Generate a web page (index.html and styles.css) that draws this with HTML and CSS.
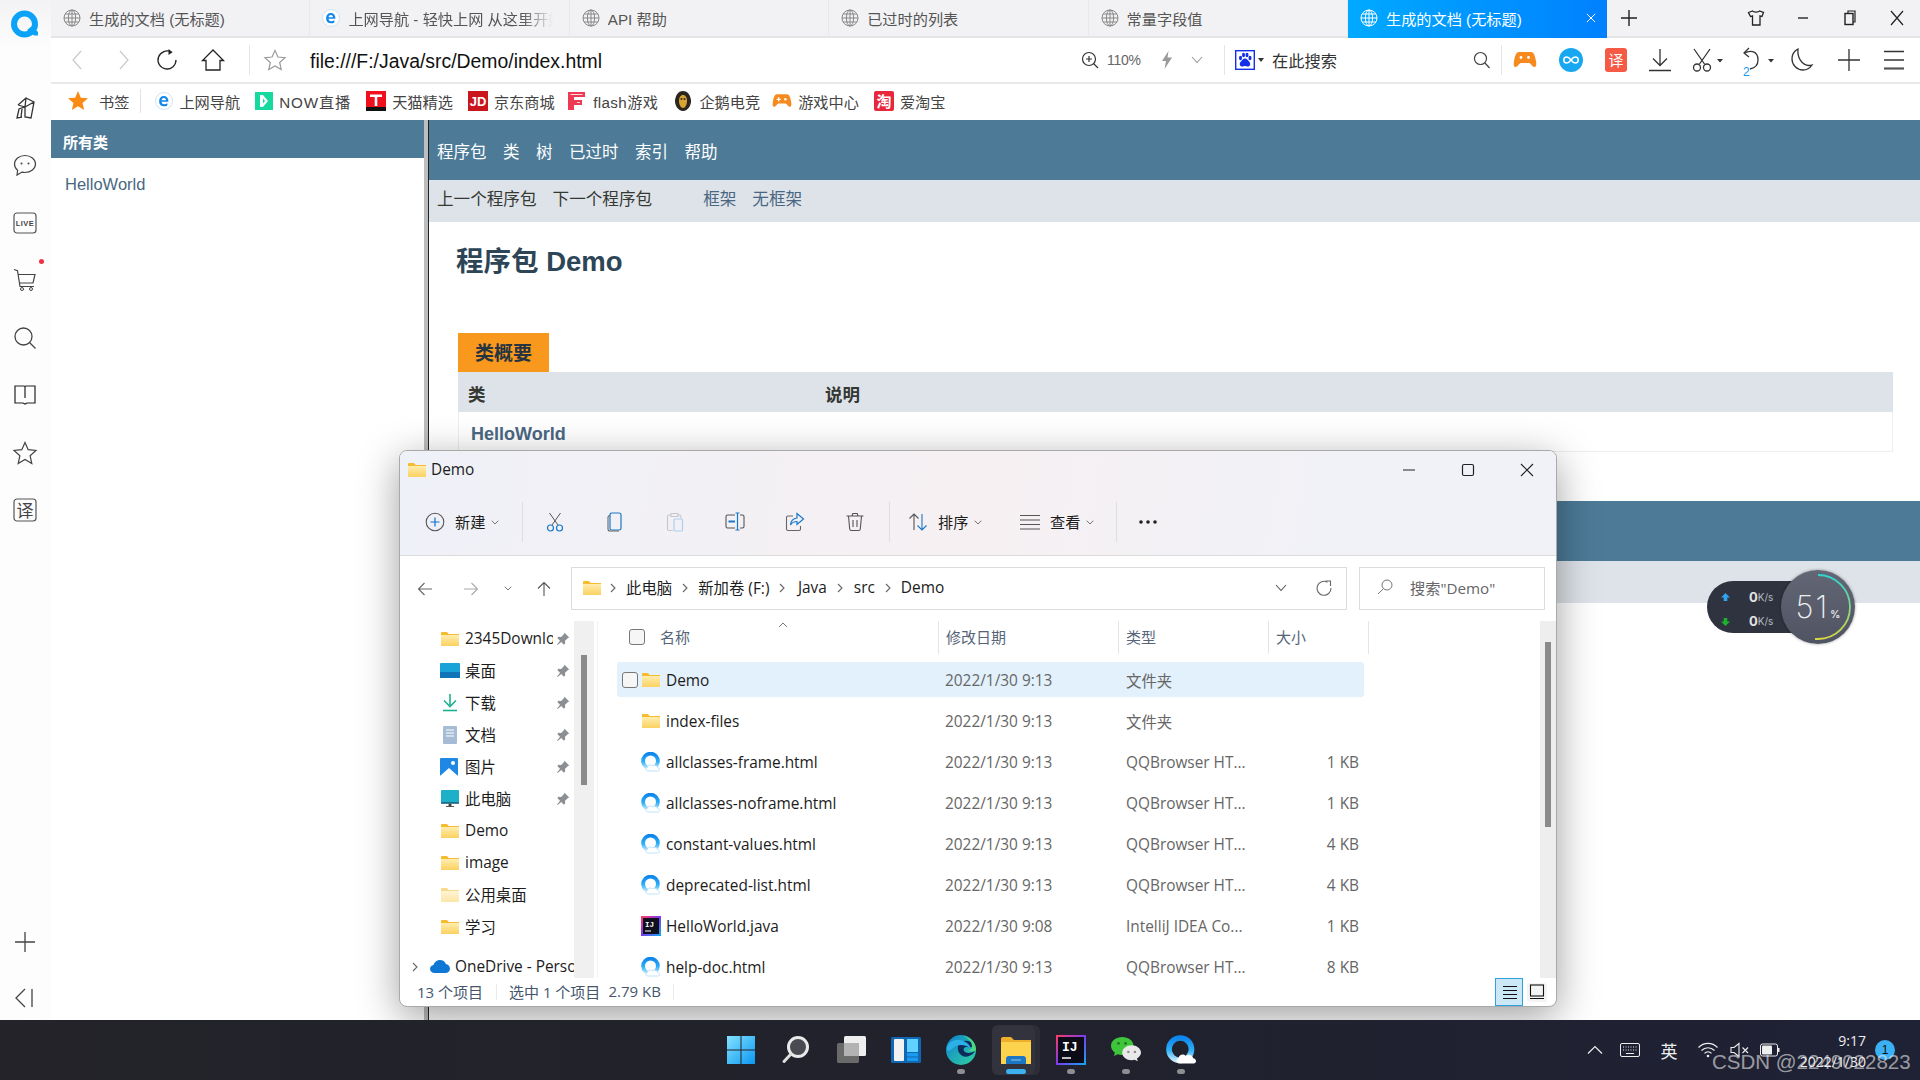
FILE: index.html
```html
<!DOCTYPE html>
<html lang="zh-CN">
<head>
<meta charset="utf-8">
<title>生成的文档 (无标题)</title>
<link rel="stylesheet" href="styles.css">
</head>
<body>
<svg class="sprite" aria-hidden="true">
  <defs>
    <linearGradient id="gFolder" x1="0" y1="0" x2="0" y2="1"><stop offset="0" stop-color="#ffedb0"/><stop offset="1" stop-color="#fbd160"/></linearGradient>
    <linearGradient id="gQ" x1="0" y1="0" x2="0" y2="1"><stop offset="0" stop-color="#0f86ec"/><stop offset=".55" stop-color="#2fb0f8"/><stop offset="1" stop-color="#c4e9fd"/></linearGradient>
    <linearGradient id="gWin" x1="0" y1="0" x2="1" y2="1"><stop offset="0" stop-color="#84e3ff"/><stop offset="1" stop-color="#0b97f2"/></linearGradient>
    <linearGradient id="gEdge" x1="0" y1="0" x2="1" y2="1"><stop offset="0" stop-color="#0f7fd0"/><stop offset="1" stop-color="#2fd3a0"/></linearGradient>
    <linearGradient id="gArc" x1="0" y1="0" x2="0" y2="1"><stop offset="0" stop-color="#2fd6cf"/><stop offset="1" stop-color="#d9d843"/></linearGradient>
    <linearGradient id="gIJ" x1="0" y1="0" x2="1" y2="1"><stop offset="0" stop-color="#fc3a6c"/><stop offset=".5" stop-color="#7a3cf0"/><stop offset="1" stop-color="#14a4f0"/></linearGradient>
    <symbol id="folder" viewBox="0 0 18 14"><path d="M0 1.2C0 .5.5 0 1.2 0h4.6l2 2H18v12H0z" fill="#f6bb2e"/><path d="M0 3h18v11H0z" fill="url(#gFolder)"/></symbol>
    <symbol id="qq" viewBox="0 0 20 20"><circle cx="9.500" cy="9" r="7.400" fill="#fff" stroke="url(#gQ)" stroke-width="3.800"/><path d="M7 19c-2.300 0-2.900-2.800-.7-3.500.4-2.400 3.300-3.300 4.800-1.500 2-1.500 5-.7 5.500 1.500 2.400.2 2.600 3.500.2 3.500z" fill="#fff" stroke="#a3d8f6" stroke-width=".7"/></symbol>
    <symbol id="pin" viewBox="0 0 14 14"><path d="M8.500.8l4.700 4.700-1.200.6-3 2.600.2 2.800-1.200 1.200-2.800-2.800L1.500 13l-.5-.5 3-3.800L1.300 6l1.200-1.200 2.800.2L8 2z" fill="#8b8f93"/></symbol>
    <symbol id="crumb" viewBox="0 0 6 10"><path d="M1 1l4 4-4 4" fill="none" stroke="#666" stroke-width="1.100"/></symbol>
    <symbol id="chevd" viewBox="0 0 8 5"><path d="M.7.7L4 4 7.300.7" fill="none" stroke="#777" stroke-width="1"/></symbol>
    <symbol id="globe" viewBox="0 0 18 18"><g fill="none" stroke="currentColor" stroke-width="1"><circle cx="9" cy="9" r="8"/><ellipse cx="9" cy="9" rx="3.600" ry="8"/><path d="M1 9h16M2.200 5h13.600M2.200 13h13.600M9 1v16"/></g></symbol>
    <symbol id="eicon" viewBox="0 0 18 18"><circle cx="9" cy="9" r="8.500" fill="#fff" stroke="#cfe3f6"/><path d="M13.300 9.800H6.600c.1 1.700 1.200 2.500 2.600 2.500 1 0 2-.3 3.200-1v2.100c-1 .6-2.200.9-3.500.9-3 0-4.800-1.900-4.800-5.100C4.100 6 6 4 8.800 4c2.800 0 4.600 2 4.600 5zM6.600 8.200H11c-.1-1.300-.9-2.100-2.100-2.100-1.200 0-2.100.8-2.300 2.100z" fill="#1287ea"/></symbol>
  </defs>
</svg>

<div class="screen">
  <aside class="rail">
    <div class="rail-logo">
      <svg class="ic-logo" viewBox="0 0 32 32"><circle cx="15.500" cy="15" r="10.500" fill="none" stroke="#0ca2f7" stroke-width="6"/><path d="M18 21l7 5.500h4V23l-6-6z" fill="#0ca2f7"/></svg>
    </div>
    <div class="rail-list">
      <div class="rail-cell"><svg class="ic-rail" viewBox="0 0 24 24"><path d="M5 9l8-7 8 4-3 16-6-1V11l-6 2-2 9 5-1M13 2l-1 9M21 6l-9 5M5 9l7 2M9 13l-1 8" fill="none" stroke="#333" stroke-width="1.300"/></svg></div>
      <div class="rail-cell"><svg class="ic-rail" viewBox="0 0 24 24"><path d="M12 2.500c5.800 0 10.500 3.800 10.500 8.500s-4.700 8.500-10.500 8.500c-1 0-2-.1-3-.4L4 22l.6-4.700C2.700 15.800 1.500 13.500 1.500 11 1.500 6.300 6.200 2.500 12 2.500z" fill="none" stroke="#444" stroke-width="1.200"/><circle cx="8.500" cy="10.500" r="1" fill="#444"/><circle cx="15.500" cy="10.500" r="1" fill="#444"/></svg></div>
      <div class="rail-cell"><svg class="ic-rail" viewBox="0 0 24 24"><rect x="1" y="2" width="22" height="20" rx="3" fill="none" stroke="#555" stroke-width="1.200"/><text x="12" y="15.300" class="live-text">LIVE</text></svg></div>
      <div class="rail-cell rail-cart"><svg class="ic-rail" viewBox="0 0 24 24"><path d="M1 1.500l3.500 1.200L7 18.500h14M5 6.500h17l-2 8.500H6.500" fill="none" stroke="#444" stroke-width="1.200"/><circle cx="9" cy="21" r="1.500" fill="none" stroke="#444"/><circle cx="18" cy="21" r="1.500" fill="none" stroke="#444"/></svg><span class="dot-red"></span></div>
      <div class="rail-cell"><svg class="ic-rail" viewBox="0 0 24 24"><circle cx="10.500" cy="10.500" r="8.500" fill="none" stroke="#444" stroke-width="1.300"/><path d="M16.500 16.500l6 6" stroke="#444" stroke-width="1.300"/></svg></div>
      <div class="rail-cell"><svg class="ic-rail" viewBox="0 0 24 24"><path d="M2 3h9c.6 0 1 .4 1 1 0-.6.4-1 1-1h9v17h-8l-2 1-2-1H2zM12 4v11" fill="none" stroke="#222" stroke-width="1.200"/></svg></div>
      <div class="rail-cell"><svg class="ic-rail" viewBox="0 0 24 24"><path d="M12 1.500l3.200 7.200 7.800.8-5.900 5.200 1.700 7.800L12 18.400l-6.800 4.100 1.700-7.800L1 9.500l7.800-.8z" fill="none" stroke="#444" stroke-width="1.200"/></svg></div>
      <div class="rail-cell"><svg class="ic-rail" viewBox="0 0 24 24"><rect x="1" y="1" width="22" height="22" rx="3" fill="none" stroke="#555" stroke-width="1.200"/><text x="12" y="18.500" class="yi-text">译</text></svg></div>
    </div>
    <div class="rail-foot">
      <div class="rail-cell rail-plus"><svg class="ic-rail" viewBox="0 0 24 24"><path d="M12 2v20M2 12h20" stroke="#444" stroke-width="1.300"/></svg></div>
      <div class="rail-cell rail-collapse"><svg class="ic-rail" viewBox="0 0 24 24"><path d="M12 3L3 12l9 9M19 3v18" fill="none" stroke="#444" stroke-width="1.300"/></svg></div>
    </div>
  </aside>

  <div class="browser">
    <div class="tabstrip">
      <div class="tab"><svg class="ic-globe"><use href="#globe"/></svg><span class="tab-text">生成的文档 (无标题)</span></div>
      <div class="tab"><svg class="ic-globe"><use href="#eicon"/></svg><span class="tab-text tab-fade">上网导航 - 轻快上网 从这里开始</span></div>
      <div class="tab"><svg class="ic-globe"><use href="#globe"/></svg><span class="tab-text">API 帮助</span></div>
      <div class="tab"><svg class="ic-globe"><use href="#globe"/></svg><span class="tab-text">已过时的列表</span></div>
      <div class="tab"><svg class="ic-globe"><use href="#globe"/></svg><span class="tab-text">常量字段值</span></div>
      <div class="tab tab-active"><svg class="ic-globe"><use href="#globe"/></svg><span class="tab-text">生成的文档 (无标题)</span><svg class="ic-tabx" viewBox="0 0 12 12"><path d="M1 1l10 10M11 1L1 11" stroke="#fff" stroke-width="1.200"/></svg></div>
      <div class="newtab"><svg class="ic-18" viewBox="0 0 18 18"><path d="M9 1v16M1 9h16" stroke="#222" stroke-width="1.400"/></svg></div>
      <div class="winbtns">
        <div class="winbtn"><svg class="ic-18" viewBox="0 0 18 18"><path d="M1.500 3.500L5.500 2c.8 1.500 6.200 1.500 7 0l4 1.500-1.500 4-2-.7V16H5.500V6.800l-2 .7z" fill="none" stroke="#222" stroke-width="1.300"/></svg></div>
        <div class="winbtn"><svg class="ic-18" viewBox="0 0 18 18"><path d="M4 9h10" stroke="#333" stroke-width="1.500"/></svg></div>
        <div class="winbtn"><svg class="ic-18" viewBox="0 0 18 18"><path d="M7 4V2h7v11h-2" fill="none" stroke="#222" stroke-width="1.200"/><rect x="4" y="4.500" width="8" height="11" fill="none" stroke="#222" stroke-width="1.400"/></svg></div>
        <div class="winbtn"><svg class="ic-18" viewBox="0 0 18 18"><path d="M3 2l12 14M15 2L3 16" stroke="#222" stroke-width="1.200"/></svg></div>
      </div>
    </div>

    <div class="addrbar">
      <div class="nav-cell"><svg class="ic-24" viewBox="0 0 24 24"><path d="M15 3l-8 9 8 9" fill="none" stroke="#c9c9c9" stroke-width="1.200"/></svg></div>
      <div class="nav-cell"><svg class="ic-24" viewBox="0 0 24 24"><path d="M9 3l8 9-8 9" fill="none" stroke="#c9c9c9" stroke-width="1.200"/></svg></div>
      <div class="nav-cell"><svg class="ic-24" viewBox="0 0 24 24"><path d="M15.500 4.200A9 9 0 1 0 20 12" fill="none" stroke="#222" stroke-width="1.300"/><path d="M12.500 1l4 3.300-4 2.700z" fill="#222"/></svg></div>
      <div class="nav-cell"><svg class="ic-24" viewBox="0 0 24 24"><path d="M12 2L1.500 12.500H5V22h14v-9.500h3.500z" fill="none" stroke="#222" stroke-width="1.300"/></svg></div>
      <span class="vsep vsep-addr"></span>
      <div class="star-cell"><svg class="ic-22" viewBox="0 0 24 24"><path d="M12 1.500l3.200 7.200 7.800.8-5.900 5.200 1.700 7.800L12 18.400l-6.800 4.100 1.700-7.800L1 9.500l7.800-.8z" fill="none" stroke="#999" stroke-width="1.300"/></svg></div>
      <span class="url">file:///F:/Java/src/Demo/index.html</span>
      <div class="addr-right">
        <svg class="ic-18" viewBox="0 0 18 18"><circle cx="8" cy="8" r="6.500" fill="none" stroke="#333" stroke-width="1.200"/><path d="M12.500 12.500l4.500 4.500M5 8h6M8 5v6" stroke="#333" stroke-width="1.200"/></svg>
        <span class="zoompct">110%</span>
        <svg class="ic-bolt" viewBox="0 0 12 18"><path d="M7.500 0L1 10h4l-1.500 8L11 6.500H6.500z" fill="#9a9a9a"/></svg>
        <svg class="ic-chev" viewBox="0 0 12 8"><path d="M1 1l5 5.500L11 1" fill="none" stroke="#999" stroke-width="1.100"/></svg>
        <span class="vsep vsep-search"></span>
        <svg class="ic-baidu" viewBox="0 0 20 20"><rect x=".7" y=".7" width="18.600" height="18.600" fill="#fff" stroke="#1230e8" stroke-width="1.400"/><g fill="#1230e8"><ellipse cx="5.500" cy="8" rx="1.500" ry="2.200"/><ellipse cx="8.500" cy="5" rx="1.500" ry="2.200"/><ellipse cx="12" cy="5" rx="1.500" ry="2.200"/><ellipse cx="15" cy="8" rx="1.500" ry="2.200"/><path d="M10 8.500c2 0 3 2 4.500 3.500 1.500 2 .5 5-2 4.500-1-.2-1.700-.5-2.500-.5s-1.500.3-2.500.5c-2.500.5-3.500-2.500-2-4.500C7 10.500 8 8.500 10 8.500z"/></g></svg>
        <span class="caret"></span>
        <span class="searchhint">在此搜索</span>
        <svg class="ic-mag" viewBox="0 0 18 18"><circle cx="7.500" cy="7.500" r="6" fill="none" stroke="#444" stroke-width="1.200"/><path d="M12 12l4.500 5" stroke="#444" stroke-width="1.200"/></svg>
        <span class="vsep vsep-tools"></span>
        <div class="tools">
          <div class="tool"><svg class="ic-24" viewBox="0 0 24 24"><path d="M6 4h12c3 0 4 4 5 9 .6 3.500.2 6-1.500 6-2.500 0-3.500-4-5.500-4H8c-2 0-3 4-5.500 4C.8 19 .4 16.500 1 13c1-5 2-9 5-9z" fill="#f68a1e"/><circle cx="8" cy="9.500" r="1.400" fill="#fff"/><circle cx="15.500" cy="9.500" r="1.400" fill="#fff"/></svg></div>
          <div class="tool"><svg class="ic-24" viewBox="0 0 24 24"><circle cx="12" cy="12" r="12" fill="#18a8f1"/><path d="M12 12c-1.500-2-2.800-3-4.200-3a3 3 0 0 0 0 6c1.400 0 2.700-1 4.200-3 1.500-2 2.800-3 4.200-3a3 3 0 0 1 0 6c-1.400 0-2.700-1-4.200-3z" fill="none" stroke="#fff" stroke-width="1.500"/></svg></div>
          <div class="tool"><svg class="ic-24" viewBox="0 0 24 24"><rect x="1" y="0" width="22" height="24" rx="3" fill="#f55a45"/><text x="12" y="18" class="yi-white">译</text></svg></div>
          <div class="tool"><svg class="ic-24" viewBox="0 0 24 24"><path d="M12 1v16M5 10.500l7 7 7-7M1 22.500h22" fill="none" stroke="#333" stroke-width="1.300"/></svg></div>
          <div class="tool"><svg class="ic-24 ic-scis" viewBox="0 0 24 24"><path d="M4 1l10.500 15M20 1L9.500 16" stroke="#333" stroke-width="1.300"/><circle cx="7" cy="19.500" r="3.500" fill="none" stroke="#333" stroke-width="1.300"/><circle cx="17" cy="19.500" r="3.500" fill="none" stroke="#333" stroke-width="1.300"/><path d="M27 11h6l-3 3.500z" fill="#333"/></svg></div>
          <div class="tool"><svg class="ic-24 ic-undo" viewBox="0 0 24 24"><path d="M2 5c3-2 13-4 13 7 0 5-3 8-8 9" fill="none" stroke="#333" stroke-width="1.300"/><path d="M6 0L1 5l5 4" fill="none" stroke="#333" stroke-width="1.300"/><text x="0" y="28" class="undo-num">2</text><path d="M25 11h6l-3 3.500z" fill="#333"/></svg></div>
          <div class="tool"><svg class="ic-24" viewBox="0 0 24 24"><path d="M8 1C4 3 2 7 2 11c0 6 5 11 11 11 4 0 7-2 9-5-1 .3-2 .5-3 .5-7 0-12-8-11-16.500z" fill="none" stroke="#333" stroke-width="1.300"/></svg></div>
          <div class="tool"><svg class="ic-24" viewBox="0 0 24 24"><path d="M12 1v22M1 12h22" stroke="#333" stroke-width="1.300"/></svg></div>
          <div class="tool"><svg class="ic-24" viewBox="0 0 24 24"><path d="M2 3.500h20M2 12h20" stroke="#333" stroke-width="1.400"/><path d="M2 20.500h20" stroke="#555" stroke-width="2.200"/></svg></div>
        </div>
      </div>
    </div>

    <div class="bookmarks">
      <div class="bm bm-first"><svg class="ic-20" viewBox="0 0 20 20"><path d="M10 0l2.800 6.700 7.200.6-5.500 4.700 1.700 7-6.200-3.800L3.800 19l1.700-7L0 7.300l7.200-.6z" fill="#fb8a14"/></svg><span>书签</span></div>
      <span class="vsep vsep-bm"></span>
      <div class="bm"><svg class="ic-18" viewBox="0 0 18 18"><use href="#eicon"/></svg><span>上网导航</span></div>
      <div class="bm bm-wide"><svg class="ic-18" viewBox="0 0 18 18"><rect width="18" height="18" fill="#16d9a0"/><path d="M5 3h3l5 6-5 6H5zM8 6.500v5l2-2.500z" fill="#fff"/></svg><span>NOW直播</span></div>
      <div class="bm"><svg class="ic-20" viewBox="0 0 20 20"><rect width="20" height="20" fill="#f00f1d"/><rect y="16" width="20" height="4" fill="#111"/><path d="M4 3.500h12V6h-4.700v9H8.700V6H4z" fill="#fff"/></svg><span>天猫精选</span></div>
      <div class="bm"><svg class="ic-20" viewBox="0 0 20 20"><rect width="20" height="20" fill="#c9161d"/><text x="10" y="14.500" class="jd-text">JD</text></svg><span>京东商城</span></div>
      <div class="bm bm-flash"><svg class="ic-20" viewBox="0 0 20 20"><path d="M1 1h17v5H7v3h8v5H7v5H1z" fill="#ee3b55"/><path d="M3.500 3.500h12M10 11.500h3" stroke="#fff" stroke-width=".8"/></svg><span>flash游戏</span></div>
      <div class="bm"><svg class="ic-20" viewBox="0 0 20 20"><path d="M10 0c4 0 7 3 8 9 .5 5-3 11-8 11S1.500 14 2 9c1-6 4-9 8-9z" fill="#2c2620"/><path d="M10 4c2.500 0 4 2.500 4 6s-1.800 7-4 7-4-3.500-4-7 1.500-6 4-6z" fill="#d9a531"/><circle cx="8.500" cy="8" r="1" fill="#2c2620"/><circle cx="11.500" cy="8" r="1" fill="#2c2620"/></svg><span>企鹅电竞</span></div>
      <div class="bm bm-game"><svg class="ic-20" viewBox="0 0 24 24"><path d="M6 4h12c3 0 4 4 5 9 .6 3.500.2 6-1.500 6-2.500 0-3.500-4-5.500-4H8c-2 0-3 4-5.500 4C.8 19 .4 16.500 1 13c1-5 2-9 5-9z" fill="#f68a1e"/><path d="M5.500 10h5M8 7.500v5" stroke="#fff" stroke-width="1.500"/><circle cx="16" cy="10" r="1.500" fill="#fff"/></svg><span>游戏中心</span></div>
      <div class="bm"><svg class="ic-20" viewBox="0 0 20 20"><rect width="20" height="20" rx="2" fill="#e8263c"/><text x="10" y="15.500" class="yi-tao">淘</text></svg><span>爱淘宝</span></div>
    </div>

    <div class="frames">
      <div class="frame-left">
        <div class="all-head">所有类</div>
        <div class="all-link">HelloWorld</div>
      </div>
      <div class="splitter"></div>
      <div class="frame-right">
        <nav class="topnav"><span>程序包</span><span>类</span><span>树</span><span>已过时</span><span>索引</span><span>帮助</span></nav>
        <nav class="subnav"><span>上一个程序包</span><span>下一个程序包</span><span class="sublink sublink-first">框架</span><span class="sublink">无框架</span></nav>
        <h1 class="pkg-title">程序包 Demo</h1>
        <section class="summary">
          <div class="sum-tab">类概要</div>
          <div class="sum-head"><span class="sum-h1">类</span><span>说明</span></div>
          <div class="sum-row">HelloWorld</div>
        </section>
        <nav class="topnav topnav-bottom"></nav>
        <nav class="subnav subnav-bottom"></nav>
      </div>
    </div>
  </div>
</div>

<div class="explorer">
  <div class="ex-head">
    <div class="ex-title">
      <svg class="ic-folder"><use href="#folder"/></svg>
      <span>Demo</span>
      <div class="ex-ctrls">
        <div class="ex-ctrl"><svg class="ic-14" viewBox="0 0 14 14"><path d="M1 7h12" stroke="#222" stroke-width="1.200"/></svg></div>
        <div class="ex-ctrl"><svg class="ic-14" viewBox="0 0 14 14"><rect x="1.500" y="1.500" width="11" height="11" rx="1.500" fill="none" stroke="#222" stroke-width="1.200"/></svg></div>
        <div class="ex-ctrl"><svg class="ic-14" viewBox="0 0 14 14"><path d="M1 1l12 12M13 1L1 13" stroke="#222" stroke-width="1.100"/></svg></div>
      </div>
    </div>
    <div class="ex-tools">
      <div class="tb-new"><svg class="ic-20" viewBox="0 0 20 20"><circle cx="10" cy="10" r="8.800" fill="none" stroke="#555" stroke-width="1.100"/><path d="M10 5.500v9M5.500 10h9" stroke="#0f6fc6" stroke-width="1.200"/></svg><span>新建</span><svg class="ic-chevd"><use href="#chevd"/></svg></div>
      <span class="tb-sep"></span>
      <div class="tb-icons">
        <div class="tb-ic"><svg class="ic-20" viewBox="0 0 20 20"><path d="M4.500 1l8.500 12M15.500 1L7 13" stroke="#555" stroke-width="1"/><circle cx="5.500" cy="16" r="3" fill="none" stroke="#1a78c9" stroke-width="1.200"/><circle cx="14.500" cy="16" r="3" fill="none" stroke="#1a78c9" stroke-width="1.200"/></svg></div>
        <div class="tb-ic"><svg class="ic-20" viewBox="0 0 20 20"><rect x="5" y="1" width="11" height="17" rx="1.800" fill="none" stroke="#1a78c9" stroke-width="1.200"/><path d="M5 3.500c-1.300 0-2 .8-2 2V17c0 1.300.8 2 2 2h9" fill="none" stroke="#666" stroke-width="1.100"/></svg></div>
        <div class="tb-ic"><svg class="ic-20" viewBox="0 0 20 20"><path d="M6 3H4c-1 0-1.500.6-1.500 1.500V17c0 1 .6 1.500 1.500 1.500h4M13 3h1.500c.8 0 1.300.5 1.500 1.500v2M6 1.500h7v3H6z" fill="none" stroke="#c4c8cc" stroke-width="1.100"/><rect x="9" y="7" width="8.500" height="12" rx="1.200" fill="none" stroke="#a9d0ef" stroke-width="1.200"/></svg></div>
        <div class="tb-ic"><svg class="ic-20" viewBox="0 0 20 20"><path d="M10 3H2.500C1.500 3 1 3.500 1 4.500v10c0 1 .5 1.500 1.500 1.500H10M15 3h2.500c1 0 1.500.5 1.500 1.500v10c0 1-.5 1.500-1.500 1.500H15" fill="none" stroke="#555" stroke-width="1.100"/><path d="M3.500 9.500H10" stroke="#1a78c9" stroke-width="2"/><path d="M10.500 1h4M12.500 1v17M10.500 18h4" fill="none" stroke="#1a78c9" stroke-width="1.200"/></svg></div>
        <div class="tb-ic"><svg class="ic-20" viewBox="0 0 20 20"><path d="M8 4H3C2 4 1.500 4.600 1.500 5.500v11.500C1.500 18 2 18.500 3 18.500h11c1 0 1.500-.5 1.500-1.500v-3" fill="none" stroke="#666" stroke-width="1.100"/><path d="M12 1.500l6.500 5.500-6.500 5.500V9.500c-3 0-5 1-6.500 3.500.3-4 2.500-6.500 6.500-7z" fill="none" stroke="#1a78c9" stroke-width="1.200"/></svg></div>
        <div class="tb-ic"><svg class="ic-20" viewBox="0 0 20 20"><path d="M1.500 4h17M7 4l.8-2.500h4.400L13 4M3.500 4l1.200 13c.1 1 .8 1.500 1.700 1.500h7.200c.9 0 1.600-.5 1.700-1.500L16.500 4M8 8v7M12 8v7" fill="none" stroke="#555" stroke-width="1.100"/></svg></div>
      </div>
      <span class="tb-sep tb-sep-2"></span>
      <div class="tb-sort"><svg class="ic-20" viewBox="0 0 20 20"><path d="M6 18V2M1.500 6.500L6 2l4.500 4.500" fill="none" stroke="#555" stroke-width="1.100"/><path d="M14 2v16M9.500 13.500L14 18l4.500-4.500" fill="none" stroke="#1a78c9" stroke-width="1.100"/></svg><span>排序</span><svg class="ic-chevd"><use href="#chevd"/></svg></div>
      <div class="tb-view"><svg class="ic-20" viewBox="0 0 20 20"><path d="M0 3.500h20M0 8h20M0 12.500h20M0 17h20" stroke="#555" stroke-width="1.100"/></svg><span>查看</span><svg class="ic-chevd"><use href="#chevd"/></svg></div>
      <span class="tb-sep"></span>
      <div class="tb-more"><svg class="ic-dots" viewBox="0 0 20 4"><circle cx="3" cy="2" r="1.800" fill="#222"/><circle cx="10" cy="2" r="1.800" fill="#222"/><circle cx="17" cy="2" r="1.800" fill="#222"/></svg></div>
    </div>
  </div>

  <div class="ex-addr">
    <div class="ex-nav"><svg class="ic-16" viewBox="0 0 16 16"><path d="M15 8H1.500M7.500 2l-6 6 6 6" fill="none" stroke="#666" stroke-width="1.100"/></svg></div>
    <div class="ex-nav"><svg class="ic-16" viewBox="0 0 16 16"><path d="M1 8h13.500M8.500 2l6 6-6 6" fill="none" stroke="#aaa" stroke-width="1.100"/></svg></div>
    <div class="ex-nav ex-nav-sm"><svg class="ic-chevd"><use href="#chevd"/></svg></div>
    <div class="ex-nav ex-nav-up"><svg class="ic-16" viewBox="0 0 16 16"><path d="M8 15V1.500M2 7.500l6-6 6 6" fill="none" stroke="#555" stroke-width="1.100"/></svg></div>
    <div class="crumbs">
      <svg class="ic-folder"><use href="#folder"/></svg>
      <svg class="ic-crumb ic-crumb-first"><use href="#crumb"/></svg><span>此电脑</span>
      <svg class="ic-crumb"><use href="#crumb"/></svg><span>新加卷 (F:)</span>
      <svg class="ic-crumb"><use href="#crumb"/></svg><span class="crumb-java">Java</span>
      <svg class="ic-crumb"><use href="#crumb"/></svg><span class="crumb-src">src</span>
      <svg class="ic-crumb"><use href="#crumb"/></svg><span>Demo</span>
      <div class="crumb-drop"><svg class="ic-12" viewBox="0 0 12 8"><path d="M1 1l5 5.500L11 1" fill="none" stroke="#555" stroke-width="1.100"/></svg></div>
      <div class="crumb-refresh"><svg class="ic-16" viewBox="0 0 16 16"><path d="M11.500 2.200A7 7 0 1 0 15 8" fill="none" stroke="#666" stroke-width="1.100"/><path d="M9.500 1h5v5" fill="none" stroke="#666" stroke-width="1.100"/></svg></div>
    </div>
    <div class="ex-search"><svg class="ic-16" viewBox="0 0 16 16"><circle cx="10" cy="6" r="5" fill="none" stroke="#777" stroke-width="1"/><path d="M6.500 9.500L1 15" stroke="#777" stroke-width="1"/></svg><span>搜索"Demo"</span></div>
  </div>

  <div class="ex-body">
    <div class="ex-tree">
      <div class="tree-row"><svg class="ic-folder"><use href="#folder"/></svg><span class="tree-name">2345Downloads</span><svg class="ic-pin"><use href="#pin"/></svg></div>
      <div class="tree-row"><svg class="ic-tree" viewBox="0 0 20 18"><rect y="1" width="20" height="15" rx="1" fill="#19a2d8"/><path d="M0 10h20v6H0z" fill="#0f74b8"/></svg><span class="tree-name">桌面</span><svg class="ic-pin"><use href="#pin"/></svg></div>
      <div class="tree-row"><svg class="ic-tree" viewBox="0 0 20 18"><path d="M10 0v11M4 6.500l6 6 6-6" fill="none" stroke="#1db18e" stroke-width="1.600"/><path d="M3 16.500h14" stroke="#1db18e" stroke-width="1.600"/></svg><span class="tree-name">下载</span><svg class="ic-pin"><use href="#pin"/></svg></div>
      <div class="tree-row"><svg class="ic-tree" viewBox="0 0 20 18"><rect x="3" y="0" width="14" height="18" rx="1" fill="#a6bcd4"/><path d="M6 4h8M6 7h8M6 10h8" stroke="#fff" stroke-width="1"/></svg><span class="tree-name">文档</span><svg class="ic-pin"><use href="#pin"/></svg></div>
      <div class="tree-row"><svg class="ic-tree" viewBox="0 0 20 18"><rect y="0" width="18" height="18" rx="1" fill="#1f88e5"/><path d="M0 18l9-8 9 8z" fill="#fff"/><circle cx="13" cy="5" r="2" fill="#fff"/></svg><span class="tree-name">图片</span><svg class="ic-pin"><use href="#pin"/></svg></div>
      <div class="tree-row"><svg class="ic-tree" viewBox="0 0 20 18"><rect x="1" width="18" height="13" rx="1" fill="#1fb0c9"/><path d="M1 13h18" stroke="#0f5a7a" stroke-width="1.500"/><path d="M9 14h2v2H9zM6 16.500h8" stroke="#555" stroke-width="1"/></svg><span class="tree-name">此电脑</span><svg class="ic-pin"><use href="#pin"/></svg></div>
      <div class="tree-row"><svg class="ic-folder"><use href="#folder"/></svg><span class="tree-name">Demo</span></div>
      <div class="tree-row"><svg class="ic-folder"><use href="#folder"/></svg><span class="tree-name">image</span></div>
      <div class="tree-row"><svg class="ic-folder ic-folder-pale"><use href="#folder"/></svg><span class="tree-name">公用桌面</span></div>
      <div class="tree-row"><svg class="ic-folder"><use href="#folder"/></svg><span class="tree-name">学习</span></div>
      <div class="tree-cloud"><svg class="ic-crumb"><use href="#crumb"/></svg><svg class="ic-cloud" viewBox="0 0 20 13"><path d="M4.500 13C2 13 0 11.300 0 9c0-2 1.500-3.600 3.500-3.900C4.300 2.200 6.800 0 10 0c2.800 0 5 1.500 5.800 4C18 4.400 20 6.300 20 8.700 20 11.200 18 13 15.500 13z" fill="#0f78d4"/></svg><span class="tree-od">OneDrive - Personal</span></div>
    </div>
    <div class="ex-tree-bar"><span class="thumb thumb-tree"></span></div>
    <div class="ex-list">
      <div class="list-head">
        <div class="lh lh-name"><span class="cb cb-head"></span><span>名称</span><svg class="ic-sort" viewBox="0 0 10 6"><path d="M1 5l4-4 4 4" fill="none" stroke="#777" stroke-width="1"/></svg></div>
        <div class="lh lh-date">修改日期</div>
        <div class="lh lh-type">类型</div>
        <div class="lh lh-size">大小</div>
      </div>
      <div class="row row-sel"><span class="cb"></span><span class="fname"><svg class="ic-folder"><use href="#folder"/></svg>Demo</span><span>2022/1/30 9:13</span><span>文件夹</span><span class="fsize"></span></div>
      <div class="row"><span></span><span class="fname"><svg class="ic-folder"><use href="#folder"/></svg>index-files</span><span>2022/1/30 9:13</span><span>文件夹</span><span class="fsize"></span></div>
      <div class="row"><span></span><span class="fname"><svg class="ic-file"><use href="#qq"/></svg>allclasses-frame.html</span><span>2022/1/30 9:13</span><span>QQBrowser HT...</span><span class="fsize">1 KB</span></div>
      <div class="row"><span></span><span class="fname"><svg class="ic-file"><use href="#qq"/></svg>allclasses-noframe.html</span><span>2022/1/30 9:13</span><span>QQBrowser HT...</span><span class="fsize">1 KB</span></div>
      <div class="row"><span></span><span class="fname"><svg class="ic-file"><use href="#qq"/></svg>constant-values.html</span><span>2022/1/30 9:13</span><span>QQBrowser HT...</span><span class="fsize">4 KB</span></div>
      <div class="row"><span></span><span class="fname"><svg class="ic-file"><use href="#qq"/></svg>deprecated-list.html</span><span>2022/1/30 9:13</span><span>QQBrowser HT...</span><span class="fsize">4 KB</span></div>
      <div class="row"><span></span><span class="fname"><svg class="ic-file" viewBox="0 0 20 20"><rect x="1" y="1" width="18" height="18" fill="#0f0f1e" stroke="url(#gIJ)" stroke-width="2"/><text x="4" y="11" class="ij-small">IJ</text><path d="M4 15h6" stroke="#fff"/></svg>HelloWorld.java</span><span>2022/1/30 9:08</span><span>IntelliJ IDEA Co...</span><span class="fsize">1 KB</span></div>
      <div class="row"><span></span><span class="fname"><svg class="ic-file"><use href="#qq"/></svg>help-doc.html</span><span>2022/1/30 9:13</span><span>QQBrowser HT...</span><span class="fsize">8 KB</span></div>
    </div>
    <div class="ex-list-bar"><span class="thumb thumb-list"></span></div>
  </div>

  <div class="ex-status">
    <span class="st-count">13 个项目</span><span class="st-sep"></span><span class="st-sel">选中 1 个项目</span><span class="st-size">2.79 KB</span><span class="st-sep st-sep-2"></span>
    <div class="st-views">
      <div class="view-on"><svg class="ic-16" viewBox="0 0 16 16"><path d="M1 2.500h14M1 6.500h14M1 10.500h14M1 14.500h14" stroke="#111" stroke-width="1"/></svg></div>
      <div class="view-off"><svg class="ic-16" viewBox="0 0 16 16"><rect x="1.500" y="1" width="13" height="11" fill="none" stroke="#111" stroke-width="1.100"/><path d="M1 14.500h14" stroke="#111" stroke-width="1"/></svg></div>
    </div>
  </div>
</div>

<div class="netwidget">
  <div class="net-pill">
    <div class="net-line"><svg class="ic-arrow" viewBox="0 0 10 10"><path d="M5 0l5 5H7v4H3V5H0z" fill="#2ea3ee"/></svg><b>0</b><span>K/s</span></div>
    <div class="net-line"><svg class="ic-arrow" viewBox="0 0 10 10"><path d="M5 10l5-5H7V1H3v4H0z" fill="#1eb12e"/></svg><b>0</b><span>K/s</span></div>
  </div>
  <div class="net-circle">
    <svg class="net-arc" viewBox="0 0 74 74"><path d="M37 5a32 32 0 0 1 0 64h-3" fill="none" stroke="url(#gArc)" stroke-width="1.800"/></svg>
    <span class="net-num">51</span><span class="net-pct">%</span>
  </div>
</div>

<footer class="taskbar">
  <div class="tb-apps">
    <div class="app"><svg class="ic-app" viewBox="0 0 30 30"><path d="M1 1h13.500v13.500H1zM15.500 1H29v13.500H15.500zM1 15.500h13.500V29H1zM15.500 15.500H29V29H15.500z" fill="url(#gWin)"/></svg></div>
    <div class="app"><svg class="ic-app" viewBox="0 0 30 30"><circle cx="17" cy="12" r="9.500" fill="#4a4a52" stroke="#eaeaea" stroke-width="3"/><path d="M10 19l-7 7.500" stroke="#e0e0e0" stroke-width="3" stroke-linecap="round"/></svg></div>
    <div class="app"><svg class="ic-app" viewBox="0 0 30 30"><rect x="1" y="8" width="22" height="20" rx="1.500" fill="#6a6a6a"/><rect x="8" y="1" width="22" height="20" rx="1.500" fill="#eeeeee"/><rect x="8" y="8" width="15" height="13" fill="#b3b3b3"/></svg></div>
    <div class="app"><svg class="ic-app" viewBox="0 0 30 30"><rect y="2" width="30" height="26" rx="1.500" fill="#1167b1"/><rect x="3" y="4" width="10" height="22" rx="1" fill="#f2f2f2"/><rect x="16" y="4" width="11" height="13" fill="#5fd2ff"/><rect x="16" y="18" width="11" height="3.500" fill="#1a9bf0"/><rect x="16" y="22.500" width="11" height="3.500" fill="#1a9bf0"/></svg></div>
    <div class="app app-run"><svg class="ic-app" viewBox="0 0 30 30"><circle cx="15" cy="15" r="15" fill="url(#gEdge)"/><path d="M29 11c-2-4-7-6-11-5-5 1-7 5-6 9 1 5 6 8 11 6 3-1 5-3 6-5-3 2-9 3-11 0-1-2 0-4 3-4s6 1 8-1z" fill="#0d2c5c"/><path d="M1 12c2-5 7-8 13-7 5 1 10 4 11 9-4-4-13-6-18-1-2 2-4 4-6 2z" fill="#2bb0e8"/><path d="M30 15c0-7-5-13-13-14 5 2 9 6 9 10s-2 4-4 4c3 2 8 1 8 0z" fill="#4fd77d"/></svg></div>
    <div class="app app-active"><svg class="ic-app" viewBox="0 0 30 30"><path d="M0 4c0-1 .5-2 2-2h8l3 3h17v24H0z" fill="#eeb02a"/><path d="M0 7h30v22H0z" fill="#fdd34e"/><path d="M5 24c0-2 1-3 3-3h14c2 0 3 1 3 3v5H5z" fill="#1b76c4"/><path d="M10 25h10" stroke="#8fcaf2"/></svg></div>
    <div class="app app-run"><svg class="ic-app ic-ij" viewBox="0 0 30 30"><rect x="1" y="1" width="28" height="28" fill="#0c0c18" stroke="url(#gIJ)" stroke-width="2"/><text x="6" y="16" class="ij-big">IJ</text><path d="M6 23h9" stroke="#fff" stroke-width="1.500"/></svg></div>
    <div class="app app-run"><svg class="ic-app" viewBox="0 0 32 30"><path d="M12 1C5.500 1 0 5 0 10.500c0 3 1.600 5.500 4.200 7.300L3 21.500l4.300-2c1.500.4 3 .7 4.700.7C18.500 20 24 15.800 24 10.500 24 5 18.500 1 12 1z" fill="#3ec53c"/><path d="M22 10c-5.500 0-10 3.500-10 8s4.500 8 10 8c1.200 0 2.300-.2 3.300-.5l3.200 1.500-.8-3c2.600-1.500 4.300-3.700 4.300-6 0-4.500-4.500-8-10-8z" fill="#e9e9e9"/><circle cx="18.500" cy="17" r="1.300" fill="#888"/><circle cx="25.500" cy="17" r="1.300" fill="#888"/><circle cx="8" cy="8" r="1.500" fill="#1e7a1e"/><circle cx="15.500" cy="8" r="1.500" fill="#1e7a1e"/></svg></div>
    <div class="app app-run"><svg class="ic-app" viewBox="0 0 20 20"><circle cx="9.500" cy="9.500" r="7.500" fill="#20222c" stroke="url(#gQ)" stroke-width="3.800"/><path d="M9 19c-2.300 0-2.900-2.800-.7-3.500.4-2.400 3.300-3.300 4.800-1.500 2-1.500 4.500-.7 5 1.500 2.400.2 2.600 3.500.2 3.500z" fill="#fff"/></svg></div>
  </div>
  <div class="tray">
    <div class="tray-cell"><svg class="ic-16" viewBox="0 0 16 16"><path d="M1 11.500l7-7 7 7" fill="none" stroke="#eee" stroke-width="1.200"/></svg></div>
    <div class="tray-cell"><svg class="ic-kb" viewBox="0 0 20 14"><rect x=".5" y=".5" width="19" height="13" rx="1.500" fill="none" stroke="#eee"/><path d="M3 4h14M3 7h14" stroke="#eee" stroke-dasharray="1 1.500"/><path d="M6 10.500h8" stroke="#eee"/></svg></div>
    <div class="tray-cell tray-ime">英</div>
    <div class="tray-cell"><svg class="ic-20" viewBox="0 0 20 16"><path d="M.5 5.500c5.300-5.400 13.700-5.400 19 0M3.500 8.500c3.700-3.700 9.300-3.700 13 0M6.500 11.300c2-2 5-2 7 0" fill="none" stroke="#eee" stroke-width="1.200"/><circle cx="10" cy="14" r="1.300" fill="#eee"/></svg></div>
    <div class="tray-cell"><svg class="ic-20" viewBox="0 0 20 16"><path d="M1 5.500h3L9 1.500v13L4 10.500H1z" fill="none" stroke="#eee" stroke-width="1.100"/><path d="M12.500 5.500l5.500 5.500M18 5.500L12.500 11" stroke="#eee" stroke-width="1.100"/></svg></div>
    <div class="tray-cell"><svg class="ic-20" viewBox="0 0 20 14"><rect x=".5" y="1" width="17" height="12" rx="2" fill="none" stroke="#eee"/><rect x="2" y="2.500" width="10" height="9" rx="1" fill="#eee"/><rect x="18" y="5" width="1.500" height="4" fill="#eee"/></svg></div>
    <div class="clock"><span>9:17</span><span>2022/1/30</span></div>
    <div class="tray-cell"><span class="notif">1</span></div>
  </div>
  <span class="watermark">CSDN @2249022823</span>
</footer>
</body>
</html>
```

FILE: styles.css
```css
* { box-sizing: border-box; }
html, body { margin: 0; padding: 0; width: 1920px; height: 1080px; overflow: hidden; }
body {
  position: relative;
  background: #fff;
  font-family: "Liberation Sans", "Noto Sans CJK SC", sans-serif;
  color: #222;
}
svg { display: block; flex: none; overflow: visible; }
.sprite { position: absolute; width: 0; height: 0; }

.ic-14 { width: 14px; height: 14px; }
.ic-12 { width: 12px; height: 8px; }
.ic-16 { width: 16px; height: 16px; }
.ic-18 { width: 18px; height: 18px; }
.ic-20 { width: 20px; height: 20px; }
.ic-22 { width: 22px; height: 22px; }
.ic-24 { width: 24px; height: 24px; }

/* browser shell */
.screen { display: flex; height: 1020px; }
.rail { width: 51px; flex: none; background: #fdfdfd; display: flex; flex-direction: column; }
.rail-logo { height: 52px; display: flex; align-items: center; justify-content: center; padding-bottom: 3px; background: linear-gradient(#f3f3f5, #fdfdfd); }
.ic-logo { width: 32px; height: 32px; margin-right: 1px; }
.rail-list { display: flex; flex-direction: column; padding-top: 27px; }
.rail-cell { height: 57.500px; display: flex; align-items: center; justify-content: center; }
.rail-cart { position: relative; }
.ic-rail { width: 24px; height: 24px; margin-right: 2px; }
.dot-red { position: absolute; width: 5px; height: 5px; border-radius: 50%; background: #f03046; left: 39px; top: 7px; }
.rail-foot { margin-top: auto; display: flex; flex-direction: column; }
.rail-plus { height: 68px; }
.rail-collapse { height: 44px; }
.live-text { font: bold 7.500px "Liberation Sans", sans-serif; fill: #444; text-anchor: middle; letter-spacing: .5px; }
.yi-text { font: 17px "Noto Sans CJK SC", sans-serif; fill: #444; text-anchor: middle; }
.yi-white { font: 15px "Noto Sans CJK SC", sans-serif; fill: #fff; text-anchor: middle; }
.undo-num { font: 12px "Liberation Sans", sans-serif; fill: #2196f3; }
.jd-text { font: bold 13px "Liberation Sans", sans-serif; fill: #fff; text-anchor: middle; }
.yi-tao { font: bold 15px "Noto Sans CJK SC", sans-serif; fill: #fff; text-anchor: middle; }

.browser { flex: 1; display: flex; flex-direction: column; min-width: 0; }
.tabstrip { height: 38px; flex: none; display: flex; background: #f2f2f4; border-bottom: 2px solid #e5e5e5; }
.tab {
  width: 259.400px; height: 38px; flex: none; display: flex; align-items: center; gap: 8px;
  padding: 0 0 2px 12px; font-size: 15.200px; color: #555; border-right: 1px solid #e8e8ea;
}
.tab-text { white-space: nowrap; overflow: hidden; max-width: 205px; }
.tab-fade { -webkit-mask-image: linear-gradient(90deg, #000 85%, transparent); mask-image: linear-gradient(90deg, #000 85%, transparent); max-width: 205px; }
.ic-globe { width: 18px; height: 18px; color: #888; }
.tab-active { color: #fff; background: linear-gradient(90deg, #00aaff, #0080ff); border-right: 0; position: relative; }
.tab-active .ic-globe { color: #fff; }
.ic-tabx { width: 10px; height: 10px; margin-left: auto; margin-right: 11px; }
.newtab { width: 44px; height: 36px; display: flex; align-items: center; justify-content: center; }
.winbtns { margin-left: auto; display: flex; }
.winbtn { width: 47px; height: 36px; display: flex; align-items: center; justify-content: center; }

.addrbar { height: 46px; flex: none; display: flex; align-items: center; padding-left: 4px; background: #fff; border-bottom: 2px solid #e8e8e8; }
.nav-cell { width: 45px; display: flex; justify-content: center; }
.vsep { display: block; width: 1px; background: #e4e4e4; flex: none; }
.vsep-addr { height: 30px; margin-left: 14px; }
.star-cell { width: 30px; margin-left: 10px; display: flex; justify-content: center; }
.url { margin-left: 20px; padding-top: 2px; font-size: 19.400px; color: #111; white-space: nowrap; }
.addr-right { margin-left: auto; display: flex; align-items: center; }
.addr-right > .ic-18:first-child { margin-right: 8px; }
.zoompct { font-size: 14px; color: #666; width: 34px; letter-spacing: -.3px; }
.ic-bolt { width: 12px; height: 18px; margin-left: 20px; }
.ic-chev { width: 12px; height: 8px; margin-left: 18px; }
.vsep-search { height: 30px; margin-left: 21px; }
.ic-baidu { width: 20px; height: 20px; margin-left: 10px; }
.caret { width: 0; height: 0; border-left: 3.500px solid transparent; border-right: 3.500px solid transparent; border-top: 4px solid #333; margin-left: 3px; }
.searchhint { margin-left: 8px; font-size: 16.300px; color: #333; width: 201px; }
.ic-mag { width: 18px; height: 18px; }
.vsep-tools { height: 30px; margin-left: 10px; }
.tools { display: grid; grid-template-columns: 46px 45px 45px 44px 45px 50px 49px 45px 45px; padding-right: 4px; }
.tool { display: flex; justify-content: center; }
.ic-scis { margin-right: 6px; }
.ic-undo { margin-left: 6px; }

.bookmarks { height: 36px; flex: none; display: flex; align-items: center; gap: 15px; padding: 0 0 2px 17px; background: #fff; font-size: 15.200px; color: #444; }
.bm { display: flex; align-items: center; gap: 6px; white-space: nowrap; }
.bm-first { gap: 11px; }
.bm-wide { letter-spacing: .9px; }
.bm-flash { letter-spacing: .4px; margin-left: -2.500px; }
.bm-game { margin-left: -3px; }
.vsep-bm { height: 24px; margin: 0 -1px 0 -4px; }

.frames { flex: 1; display: flex; min-height: 0; }
.frame-left { width: 373px; flex: none; background: #fff; }
.all-head { height: 38px; background: #4d7a97; color: #fff; font-weight: bold; font-size: 15px; padding: 14px 0 0 12px; line-height: 17px; }
.all-link { padding: 16px 0 0 14px; font-size: 16.500px; line-height: 20px; color: #4a6782; }
.splitter { width: 5px; flex: none; background: #bdbdbd; border-right: 1px solid #222; }
.frame-right { flex: 1; min-width: 0; background: #fff; }
.topnav { height: 60px; background: #4d7a97; display: flex; align-items: center; gap: 16.500px; padding: 2px 0 0 8px; color: #fff; font-size: 16.500px; }
.subnav { height: 42px; background: #dee3e9; display: flex; align-items: center; gap: 16px; padding: 0 0 7px 8px; color: #353833; font-size: 16.600px; }
.sublink { color: #4a6782; }
.sublink-first { margin-left: 35px; }
.pkg-title { margin: 0; padding: 20px 0 0 27px; height: 111px; font-size: 27.500px; line-height: 40px; color: #2c4557; font-weight: bold; }
.summary { margin: 0 27px 0 29px; height: 119px; }
.sum-tab { width: 91px; height: 39px; background: #f8981d; color: #253441; font-weight: bold; font-size: 19px; padding-bottom: 2px; display: flex; align-items: center; justify-content: center; }
.sum-head { height: 40px; background: #dee3e9; display: flex; align-items: center; padding: 2px 0 0 10px; font-weight: bold; font-size: 17.500px; color: #353833; }
.sum-h1 { width: 357px; }
.sum-row { height: 40px; border: 1px solid #eee; border-top: 0; padding: 11px 0 0 12px; font-weight: bold; font-size: 18px; line-height: 22px; color: #4a6782; }
.topnav-bottom { margin-top: 49px; }

/* explorer window */
.explorer {
  position: absolute; left: 399px; top: 450px; width: 1158px; height: 557px;
  background: #fff; border: 1px solid #a9a9a9; border-radius: 8px; overflow: hidden;
  display: flex; flex-direction: column;
  font-family: "Open Sans", "Noto Sans CJK SC", sans-serif; color: #1c1c1c; z-index: 3;
  box-shadow: 0 10px 40px rgba(0, 0, 0, .38);
}
.ex-head { height: 105px; flex: none; background: linear-gradient(100deg, #eff1f8 0%, #f6f0f2 50%, #f0f2f8 85%); border-bottom: 1px solid #dcdcdc; }
.ex-title { height: 38px; display: flex; align-items: center; padding: 0 0 1px 8px; gap: 5px; font-size: 15.400px; }
.ic-folder { width: 18px; height: 14px; }
.ic-folder-pale { opacity: .55; }
.ex-ctrls { margin-left: auto; display: flex; }
.ex-ctrl { width: 59px; display: flex; justify-content: center; }
.ex-tools { height: 66px; display: flex; align-items: center; font-size: 15.200px; }
.ic-chevd { width: 8px; height: 5px; }
.tb-new { width: 122px; display: flex; align-items: center; padding-left: 25px; }
.tb-new span, .tb-sort span, .tb-view span { margin: -2px 6px 0 10px; }
.tb-sep { display: block; width: 1px; height: 40px; background: #dedede; flex: none; }
.tb-sep-2 { margin-left: 4px; }
.tb-icons { display: flex; margin-left: 2px; }
.tb-ic { width: 60px; display: flex; justify-content: center; }
.tb-sort { width: 130px; display: flex; align-items: center; padding-left: 18px; }
.tb-view { width: 96px; display: flex; align-items: center; }
.tb-more { width: 62px; display: flex; justify-content: center; }
.ic-dots { width: 20px; height: 4px; }

.ex-addr { height: 65px; flex: none; display: flex; align-items: center; padding-left: 2px; }
.ex-nav { width: 46px; display: flex; justify-content: center; }
.ex-nav-sm { width: 28px; }
.ex-nav-up { width: 44px; margin-right: 5px; }
.crumbs { width: 776px; height: 43px; border: 1px solid #dcdcdc; display: flex; align-items: center; padding: 0 0 2px 11px; font-size: 15.400px; white-space: nowrap; }
.ic-crumb { width: 6px; height: 10px; margin: 0 10px; }
.ic-crumb-first { margin-left: 9px; }
.crumb-java { margin-left: 2.500px; }
.crumb-src { margin-left: 1px; }
.crumb-drop { margin-left: auto; width: 26px; margin-right: 16px; display: flex; justify-content: center; }
.crumb-refresh { width: 28px; margin-right: 8px; display: flex; justify-content: center; }
.ex-search { width: 186px; height: 43px; margin-left: 12px; border: 1px solid #dcdcdc; display: flex; align-items: center; gap: 17px; padding: 0 0 4px 17px; font-size: 15.200px; color: #666; }

.ex-body { height: 357px; flex: none; display: flex; overflow: hidden; }
.ex-tree { width: 174px; flex: none; padding-top: 1.500px; font-size: 15.400px; overflow: hidden; }
.tree-row { height: 32px; display: grid; grid-template-columns: 18px 88px 20px; column-gap: 6px; align-items: center; padding-left: 41px; }
.tree-row .tree-name { overflow: hidden; white-space: nowrap; }
.ic-tree { width: 20px; height: 18px; margin-left: -1px; }
.ic-pin { width: 14px; height: 14px; margin-left: -3px; }
.tree-cloud { height: 32px; margin-top: 8px; display: flex; align-items: center; padding-left: 2px; white-space: nowrap; }
.tree-cloud .ic-crumb { margin: 0 12px 0 10px; }
.ic-cloud { width: 20px; height: 13px; }
.tree-od { margin-left: 5px; }
.ex-tree-bar { width: 20px; flex: none; background: #f0f0f0; display: flex; justify-content: center; }
.thumb { display: block; width: 6px; background: #8a8a8a; }
.thumb-tree { height: 130px; margin-top: 34px; }
.ex-list { width: 943px; flex: none; margin-left: 3px; border-left: 1px solid #f2f2f2; overflow: hidden; font-size: 15.400px; }
.list-head { height: 33px; margin-bottom: 8px; display: grid; grid-template-columns: 340px 180px 150px 100px; width: 771px; border-right: 1px solid #e5e5e5; font-size: 15px; color: #566579; }
.lh { border-left: 1px solid #e5e5e5; display: flex; align-items: center; padding: 0 0 2px 7px; }
.lh-name { border-left: 0; padding-left: 31px; gap: 15px; }
.ic-sort { width: 10px; height: 6px; margin: -24px 0 0 73px; }
.cb { display: block; width: 16px; height: 16px; border: 1px solid #777; border-radius: 3px; background: #f6f6f6; }
.row { height: 35px; margin: 0 0 6px 19px; width: 747px; border-radius: 3px; display: grid; grid-template-columns: 25px 303px 181px 132px 1fr; align-items: center; color: #666; padding-top: 1px; white-space: nowrap; }
.row .cb { margin-left: 5px; }
.row-sel { background: #e3f1fc; }
.fname { display: flex; align-items: center; gap: 5px; color: #1c1c1c; }
.ic-file { width: 20px; height: 20px; margin-left: -1px; }
.fname .ic-folder { margin-right: 1px; }
.fsize { text-align: right; padding-right: 5px; }
.ij-small { font: bold 7.500px "Liberation Mono", monospace; fill: #fff; }
.ij-big { font: bold 13px "Liberation Mono", monospace; fill: #fff; }
.ex-list-bar { flex: 1; background: #eeeeee; display: flex; justify-content: center; }
.thumb-list { height: 185px; margin-top: 21px; }

.ex-status { flex: 1; display: flex; align-items: center; font-size: 15px; color: #44566c; padding: 0 0 0 17px; }
.st-count { width: 79px; padding-bottom: 2px; }
.st-sep { width: 1px; height: 16px; background: #eaeaea; }
.st-sel { margin-left: 12px; padding-bottom: 2px; }
.st-size { margin-left: 8px; padding-bottom: 2px; }
.st-sep-2 { margin-left: 12px; }
.st-views { margin-left: auto; display: flex; align-items: center; padding-right: 9px; gap: 4px; height: 100%; }
.view-on { width: 28px; height: 100%; background: #cce8f6; border: 1px solid #2aa3e0; display: flex; align-items: center; justify-content: center; padding-left: 1px; }
.view-off { width: 20px; height: 19px; background: #f4f4f4; display: flex; align-items: center; justify-content: center; border-radius: 2px; }

/* speed widget */
.netwidget { position: absolute; left: 1707px; top: 570px; width: 148px; height: 74px; z-index: 2; display: flex; align-items: center; }
.net-pill { width: 100px; height: 52px; border-radius: 26px 0 0 26px; background: #2f333f; padding: 4px 0 0 14px; color: #b7bac2; font-family: "Inter", sans-serif; }
.net-line { height: 24px; display: flex; align-items: center; font-size: 10px; }
.net-line b { margin-left: 19px; font-size: 13px; color: #e4e4e4; }
.ic-arrow { width: 9px; height: 9px; }
.net-circle {
  position: absolute; left: 74px; top: 0; width: 74px; height: 74px; border-radius: 50%;
  background: linear-gradient(#626675, #505462); box-shadow: 0 0 3px rgba(0, 0, 0, .4);
  display: flex; align-items: baseline; justify-content: center; padding-top: 20px; color: #eceef0; font-family: "Inter", sans-serif;
}
.net-arc { position: absolute; left: 0; top: 0; width: 74px; height: 74px; }
.net-num { font-size: 31px; font-weight: 200; line-height: 34px; letter-spacing: 2px; }
.net-pct { font-size: 10px; margin-left: 1px; font-weight: 600; }

/* taskbar */
.taskbar { position: relative; z-index: 5; height: 60px; background: linear-gradient(90deg, #232329 0%, #21222c 50%, #1f2135 100%); display: flex; align-items: center; color: #eee; }
.tb-apps { display: grid; grid-template-columns: repeat(9, 55.100px); margin-left: 713px; height: 60px; }
.app { position: relative; display: flex; align-items: center; justify-content: center; }
.ic-app { width: 30px; height: 30px; }
.app-run::after { content: ""; position: absolute; left: 50%; top: 49px; width: 8px; height: 5px; margin-left: -4px; border-radius: 3px; background: #8d8d92; }
.app-active::before { content: ""; position: absolute; left: 4px; top: 5px; width: 43px; height: 50px; border-radius: 6px; background: rgba(255, 255, 255, .08); box-shadow: 5px 0 0 rgba(255, 255, 255, .05); }
.app-active .ic-app { position: relative; }
.app-active::after { content: ""; position: absolute; left: 50%; top: 49px; width: 20px; height: 5px; margin-left: -10px; border-radius: 3px; background: #3db1f0; }
.tray { margin-left: auto; padding-right: 16px; display: grid; grid-template-columns: 34px 36px 42px 35px 30px 30px 81px 38px; align-items: center; height: 60px; }
.tray-cell { display: flex; align-items: center; justify-content: center; }
.ic-kb { width: 20px; height: 14px; }
.tray-ime { font-size: 17px; font-family: "Noto Sans CJK SC", sans-serif; }
.clock { display: flex; flex-direction: column; align-items: flex-end; font-size: 14px; line-height: 21px; color: #eee; font-family: "Open Sans", sans-serif; margin-top: 2px; }
.notif { width: 20px; height: 20px; border-radius: 50%; background: #3bb0f5; color: #111; font-size: 12px; display: flex; align-items: center; justify-content: center; }
.watermark { position: absolute; left: 1712px; top: 30px; font-size: 20.500px; line-height: 24px; color: rgba(235, 235, 235, .62); font-family: "Liberation Sans", sans-serif; white-space: nowrap; }
```
